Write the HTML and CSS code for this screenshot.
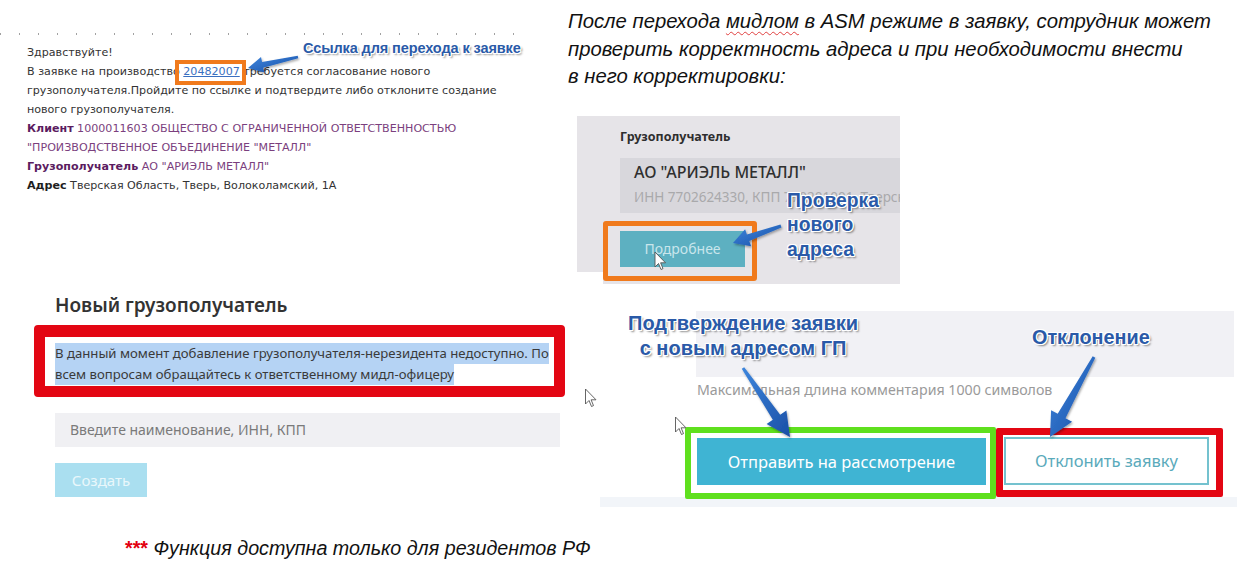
FILE: index.html
```html
<!DOCTYPE html>
<html lang="ru">
<head>
<meta charset="utf-8">
<title>Согласование нового грузополучателя</title>
<link rel="stylesheet" href="styles.css">
</head>
<body>
<div class="slide">
  <div class="row top">
    <section class="email">
      <div class="dots"></div>
      <div class="mail">
        <p>Здравствуйте!</p>
        <p>В заявке на производство <a class="req" href="#">20482007</a> требуется согласование нового</p>
        <p>грузополучателя.Пройдите по ссылке и подтвердите либо отклоните создание</p>
        <p>нового грузополучателя.</p>
        <p class="purple"><b>Клиент</b> 1000011603 ОБЩЕСТВО С ОГРАНИЧЕННОЙ ОТВЕТСТВЕННОСТЬЮ</p>
        <p class="purple">"ПРОИЗВОДСТВЕННОЕ ОБЪЕДИНЕНИЕ "МЕТАЛЛ"</p>
        <p class="purple"><b>Грузополучатель</b> АО "АРИЭЛЬ МЕТАЛЛ"</p>
        <p><b>Адрес</b> Тверская Область, Тверь, Волоколамский, 1А</p>
      </div>
      <div class="callout c1">Ссылка для перехода к заявке</div>
    </section>
    <section class="right">
      <p class="note">После перехода <span class="spell">мидлом</span> в ASM режиме в заявку, сотрудник может<br>проверить корректность адреса и при необходимости внести<br>в него корректировки:</p>
      <div class="shot1">
        <div class="shot1-body">
          <div class="lbl">Грузополучатель</div>
          <div class="card">
            <div class="card-title">АО "АРИЭЛЬ МЕТАЛЛ"</div>
            <div class="card-sub">ИНН 7702624330, КПП 770201001, Тверская</div>
          </div>
          <div class="more">Подробнее</div>
        </div>
        <div class="shot1-tail"></div>
        <div class="hl-orange"></div>
        <div class="callout c2">Проверка<br>нового<br>адреса</div>
      </div>
    </section>
  </div>
  <div class="row bottom">
    <section class="newcons">
      <h2>Новый грузополучатель</h2>
      <div class="redbox">
        <span class="sel">В данный момент добавление грузополучателя-нерезидента недоступно. По</span>
        <span class="sel">всем вопросам обращайтесь к ответственному мидл-офицеру</span>
      </div>
      <div class="input">Введите наименование, ИНН, КПП</div>
      <div class="create">Создать</div>
    </section>
    <section class="decision">
      <div class="comment"></div>
      <div class="hint">Максимальная длина комментария 1000 символов</div>
      <div class="actions">
        <div class="greenbox"><div class="btn-send">Отправить на рассмотрение</div></div>
        <div class="redbox2"><div class="btn-reject">Отклонить заявку</div></div>
      </div>
      <div class="strip"></div>
      <div class="callout c3">Подтверждение заявки<br>с новым адресом ГП</div>
      <div class="callout c4">Отклонение</div>
    </section>
  </div>
  <p class="foot"><span class="stars">***</span> Функция доступна только для резидентов РФ</p>

  <svg class="overlay" width="1237" height="568" viewBox="0 0 1237 568">
    <defs>
      <linearGradient id="ag" x1="0" y1="0" x2="1" y2="1">
        <stop offset="0" stop-color="#3d86dd"/>
        <stop offset="1" stop-color="#1a4fa6"/>
      </linearGradient>
      <filter id="sh" x="-20%" y="-20%" width="140%" height="140%">
        <feDropShadow dx="1" dy="1.5" stdDeviation="1" flood-color="#000" flood-opacity="0.35"/>
      </filter>
    </defs>
    <g fill="url(#ag)" filter="url(#sh)">
      <polygon points="297.7,55.8 262.1,61.9 261,57 248,68 264.4,72.6 263.3,67.7 298.3,58.2"/>
      <polygon points="780.5,224.6 746.9,234.4 745.1,229.2 733,243 751.1,246.2 749.3,241 781.5,227.4"/>
      <polygon points="741.8,368.8 772.8,419.7 766.6,424 790,437 786.4,410.4 780.2,414.7 744.2,367.2"/>
      <polygon points="1092.7,356.3 1057.7,413.8 1051.1,410.2 1050,437 1072.1,421.8 1065.5,418.2 1095.3,357.7"/>
    </g>
    <g fill="#fff" stroke="#555" stroke-width="0.9" stroke-linejoin="round">
      <path d="M655 252 L655 267 L658.5 263.5 L661 269.5 L663 268.6 L660.6 262.8 L665.5 262.8 Z"/>
      <path d="M585.5 389 L585.5 404 L589 400.5 L591.5 406.5 L593.5 405.6 L591.1 399.8 L596 399.8 Z"/>
      <path d="M675.5 417 L675.5 432 L679 428.5 L681.5 434.5 L683.5 433.6 L681.1 427.8 L686 427.8 Z"/>
    </g>
  </svg>
</div>
</body>
</html>
```
FILE: styles.css
```css
* { box-sizing: border-box; }
html, body { margin: 0; padding: 0; background: #fff; }
.slide {
  position: relative;
  width: 1237px;
  height: 568px;
  overflow: hidden;
  background: #fff;
}
.row { display: flex; }
.top { height: 290px; }
.bottom { height: 222px; }

/* ---------- email ---------- */
.email { position: relative; width: 568px; flex: none; padding-top: 33px; }
.dots {
  width: 515px;
  height: 2px;
  background: repeating-linear-gradient(90deg, #8a8a8a 0 1px, transparent 1px 19px);
  opacity: .8;
}
.mail {
  margin-top: 8px;
  padding-left: 27px;
  font-family: "DejaVu Sans", Verdana, sans-serif;
  font-size: 11.1px;
  line-height: 19px;
  color: #333;
}
.mail p { margin: 0; white-space: nowrap; }
.mail b { font-weight: bold; }
.mail .purple { color: #7b3f7e; }
.mail .purple b { color: #5b1c5f; }
.mail p:last-child b { color: #1e1e1e; }
.req {
  position: relative;
  color: #3a6fc0;
  text-decoration: underline;
}
.req::after {
  content: "";
  position: absolute;
  left: -8px; right: -6px;
  top: -5px; bottom: -7px;
  border: 4px solid #f07a1c;
}

/* ---------- callouts ---------- */
.callout {
  position: absolute;
  font-family: "Liberation Sans", Arial, sans-serif;
  font-weight: bold;
  color: #2a5aa8;
  white-space: nowrap;
  text-shadow:
    -1px -1px 0 #fff, 1px -1px 0 #fff, -1px 1px 0 #fff, 1px 1px 0 #fff,
    0 -1px 0 #fff, 0 1px 0 #fff, -1px 0 0 #fff, 1px 0 0 #fff,
    2px 2px 2px rgba(0,0,0,.45);
}
.c1 { left: 303px; top: 39px; font-size: 14.5px; line-height: 18px; letter-spacing: -0.1px; }
.c2 { left: 210px; top: 73px; font-size: 19.3px; line-height: 24.5px; }
.c3 { left: 28px; top: 21px; font-size: 20px; line-height: 25px; text-align: center; }
.c4 { left: 432px; top: 35px; font-size: 19.8px; line-height: 25px; }

/* ---------- right column ---------- */
.right { flex: 1; padding-top: 8px; }
.note {
  margin: 0;
  font-family: "Liberation Sans", Arial, sans-serif;
  font-style: italic;
  font-size: 20.3px;
  line-height: 27.5px;
  color: #111;
  white-space: nowrap;
}
.spell {
  text-decoration: underline wavy #e04040;
  text-decoration-thickness: 1px;
  text-underline-offset: 3px;
}
.shot1 {
  position: relative;
  margin: 25px 0 0 9px;
  width: 323px;
  font-family: "Noto Sans", "Open Sans", sans-serif;
}
.shot1-body {
  height: 156px;
  background: #e6e4e8;
  padding: 13px 0 0 43px;
  overflow: hidden;
}
.shot1-tail { margin-left: 26px; height: 12px; background: #e6e4e8; }
.lbl { font-size: 12.5px; font-weight: 700; line-height: 16px; color: #2e2e2e; }
.card {
  margin-top: 13px;
  width: 280px;
  height: 55px;
  background: #d8d7dc;
  padding: 4px 0 0 14px;
  overflow: hidden;
  white-space: nowrap;
}
.card-title { font-size: 16px; line-height: 21px; font-weight: 500; color: #2f2f2f; }
.card-sub { margin-top: 5px; font-size: 13.5px; line-height: 18px; color: #a9a9ab; }
.more {
  margin-top: 18px;
  width: 125px;
  height: 36px;
  background: #5db0c1;
  color: #c9e6ec;
  font-size: 14px;
  line-height: 36px;
  text-align: center;
}
.hl-orange {
  position: absolute;
  left: 26px;
  top: 105px;
  width: 154px;
  height: 60px;
  border: 5px solid #f07a1c;
  border-radius: 3px;
}

/* ---------- new consignee ---------- */
.newcons {
  width: 600px;
  flex: none;
  padding-left: 34px;
  font-family: "Noto Sans", "Open Sans", sans-serif;
}
.newcons h2 {
  margin: 3px 0 0 21px;
  font-size: 19px;
  line-height: 24px;
  font-weight: 600;
  color: #333;
}
.redbox {
  margin-top: 8px;
  width: 531px;
  height: 72px;
  border: 11px solid #e30613;
  border-top-width: 12px;
  border-radius: 4px;
  background: #fff;
  padding: 6px 0 0 10px;
  font-size: 13.15px;
  line-height: 21px;
  color: #3a3a3a;
  white-space: nowrap;
}
.sel { display: block; width: fit-content; background: #b5d3f4; }
.input {
  margin: 16px 0 0 21px;
  width: 505px;
  height: 34px;
  background: #f0f0f3;
  padding-left: 15px;
  font-size: 14px;
  line-height: 34px;
  color: #7a7a7a;
}
.create {
  margin: 16px 0 0 21px;
  width: 92px;
  height: 34px;
  background: #aadff0;
  color: #e9f7fb;
  font-size: 15px;
  line-height: 34px;
  text-align: center;
}

/* ---------- decision ---------- */
.decision {
  position: relative;
  flex: 1;
  padding-top: 21px;
  font-family: "Noto Sans", "Open Sans", sans-serif;
}
.comment { margin-left: 96px; width: 538px; height: 66px; background: #f1f1f5; }
.hint {
  margin: 4px 0 0 97px;
  font-size: 14.2px;
  line-height: 18px;
  color: #9a9a9a;
}
.actions { display: flex; margin: 28px 0 0 85px; }
.greenbox {
  width: 311px;
  height: 72px;
  border: 6px solid #5fe01e;
  border-radius: 2px;
  padding: 5px 4px 8px 6px;
  background: #fff;
}
.btn-send {
  height: 100%;
  background: #3fb4d3;
  color: #fff;
  font-size: 16.5px;
  line-height: 47px;
  text-align: center;
}
.redbox2 {
  margin-top: 1px;
  width: 227px;
  height: 69px;
  border: 7px solid #e30613;
  border-radius: 2px;
  padding: 2px 7px 5px 1px;
  background: #fff;
}
.btn-reject {
  height: 100%;
  border: 2px solid #74c2cf;
  color: #5aaabb;
  font-size: 16.5px;
  line-height: 44px;
  text-align: center;
}
.strip { margin-top: -2px; height: 10px; background: #f2f5f9; }

/* ---------- footer ---------- */
.foot {
  margin: 24px 0 0 125px;
  font-family: "Liberation Sans", Arial, sans-serif;
  font-style: italic;
  font-size: 19.7px;
  line-height: 24px;
  color: #111;
}
.stars { color: #e3000f; font-weight: bold; font-style: normal; }

.overlay { position: absolute; left: 0; top: 0; pointer-events: none; }
```
